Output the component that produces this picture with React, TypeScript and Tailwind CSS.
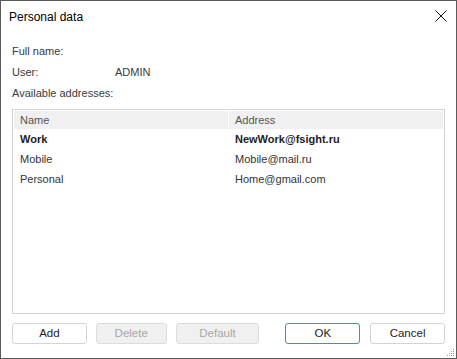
import React from "react";

const font = { fontFamily: '"Liberation Sans", Arial, sans-serif' };

function Btn({ label, kind }: { label: string; kind?: "disabled" | "primary" }) {
  const cls =
    kind === "disabled"
      ? "border-[#dcdcdc] bg-[#f0f0f0] text-[#a8a8a8]"
      : kind === "primary"
      ? "border-[#3d8ecf] bg-white text-[#222]"
      : "border-[#d4d4d4] bg-white text-[#222]";
  return (
    <div className={`h-[21px] flex items-center justify-center rounded-[3px] border text-[11.5px] ${cls}`}>
      {label}
    </div>
  );
}

export default function App() {
  const rows = [
    { n: "Work", a: "NewWork@fsight.ru", b: true },
    { n: "Mobile", a: "Mobile@mail.ru", b: false },
    { n: "Personal", a: "Home@gmail.com", b: false },
  ];
  return (
    <div style={font} className="w-[457px] h-[359px] bg-white border border-[#5a5a5a] relative flex flex-col text-[#333]">
      <div className="h-[31px] flex items-center justify-between pl-[8px] pr-[9px] shrink-0">
        <span className="text-[12px] text-black">Personal data</span>
        <svg width="12" height="12" viewBox="0 0 12 12" className="mt-[-1px]">
          <path d="M0.5 0.5 L11.5 11.5 M11.5 0.5 L0.5 11.5" stroke="#111" strokeWidth="1" />
        </svg>
      </div>
      <div className="px-[11px] flex flex-col text-[11px] text-[#3a3a3a]">
        <div className="h-[21px] flex items-center mt-[9px]">Full name:</div>
        <div className="h-[21px] flex items-center">
          <span className="w-[103px]">User:</span>
          <span>ADMIN</span>
        </div>
        <div className="h-[21px] flex items-center">Available addresses:</div>
      </div>
      <div className="mx-[11px] mt-[5px] h-[205px] border border-[#d4d4d4] p-[1px] flex flex-col text-[11px]">
        <div className="h-[18px] flex bg-[#f0f0f0] text-[#555]">
          <div className="w-[215px] pl-[6px] flex items-center border-r border-white">Name</div>
          <div className="flex-1 pl-[6px] flex items-center">Address</div>
        </div>
        {rows.map((r) => (
          <div key={r.n} className={`h-[20px] flex ${r.b ? "font-bold text-[#222]" : "text-[#333]"}`}>
            <div className="w-[215px] pl-[6px] flex items-center">{r.n}</div>
            <div className="flex-1 pl-[6px] flex items-center">{r.a}</div>
          </div>
        ))}
      </div>
      <div className="flex px-[11px] mt-[9px] items-center">
        <div className="w-[75px]"><Btn label="Add" /></div>
        <div className="w-[71px] ml-[9px]"><Btn label="Delete" kind="disabled" /></div>
        <div className="w-[84px] ml-[9px]"><Btn label="Default" kind="disabled" /></div>
        <div className="w-[75px] ml-[26px]"><Btn label="OK" kind="primary" /></div>
        <div className="w-[75px] ml-[10px]"><Btn label="Cancel" /></div>
      </div>
      <svg width="10" height="10" viewBox="0 0 10 10" className="absolute right-[1px] bottom-[1px]">
        {[[8, 2], [6, 4], [8, 4], [4, 6], [6, 6], [8, 6], [2, 8], [4, 8], [6, 8], [8, 8]].map(([x, y], i) => (
          <rect key={i} x={x} y={y} width="1" height="1" fill="#999" />
        ))}
      </svg>
    </div>
  );
}
